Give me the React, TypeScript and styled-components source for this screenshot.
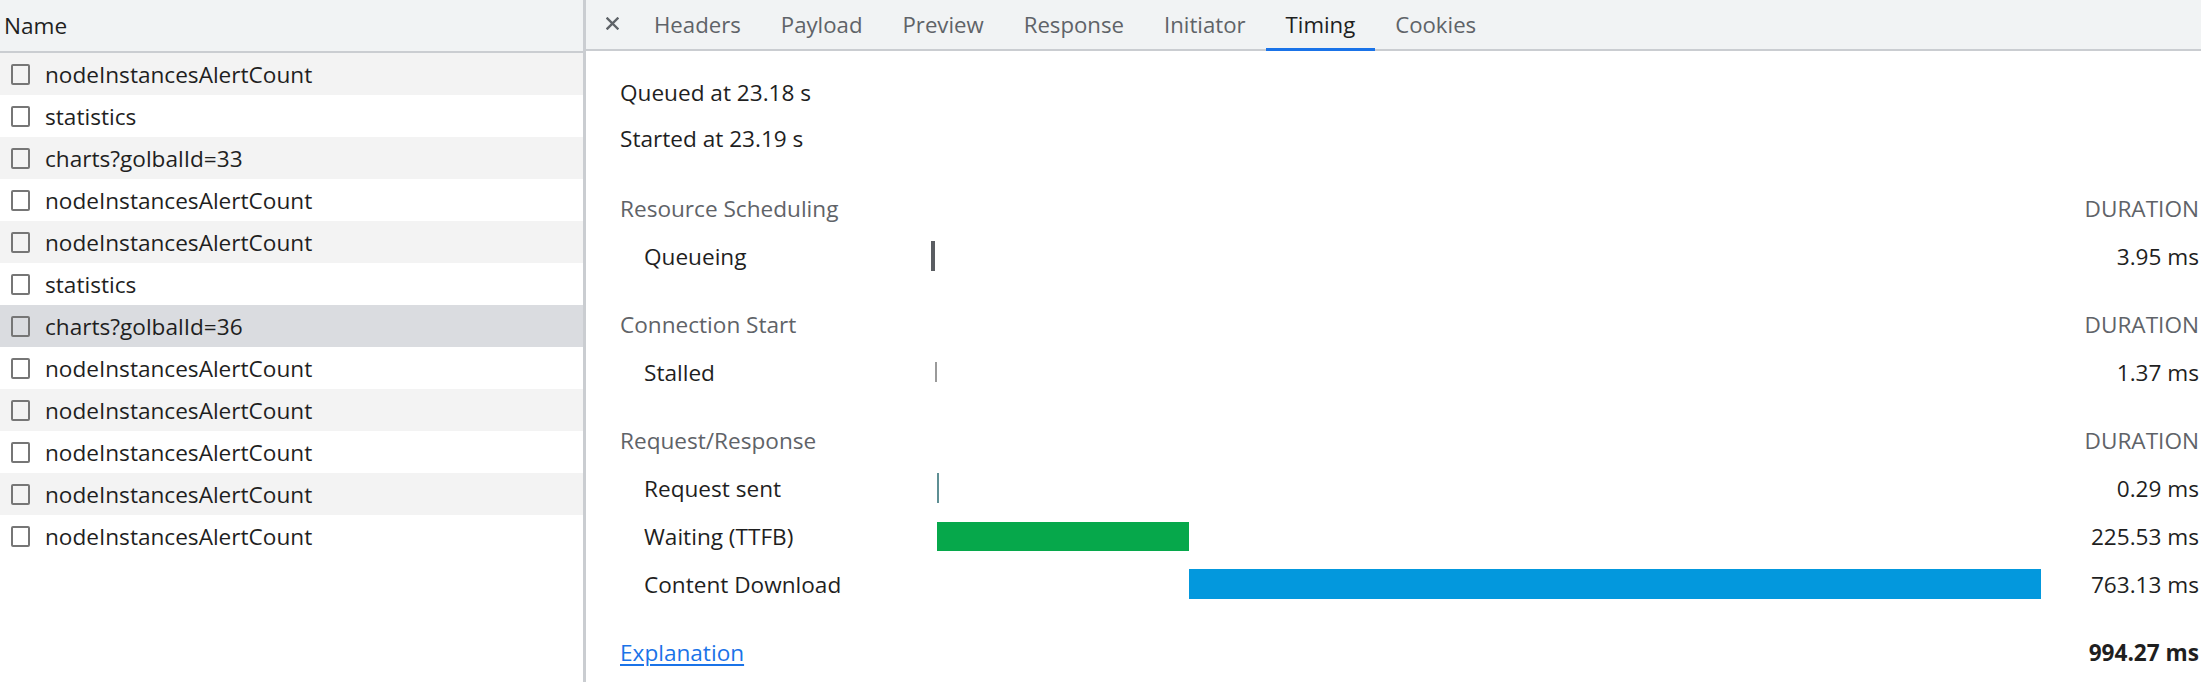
import React from "react";
import styled, { createGlobalStyle, css } from "styled-components";

const GlobalStyle = createGlobalStyle`
  html, body { margin: 0; padding: 0; background: #ffffff; }
  body { font-family: "Open Sans", "Noto Sans", sans-serif; color: #1f1f1f; }
  * { box-sizing: border-box; }
`;

const Page = styled.div`
  display: flex;
  width: 2201px;
  height: 682px;
  overflow: hidden;
  background: #ffffff;
  font-size: 22.6px;
`;

const LeftPane = styled.div`
  width: 583px;
  flex: none;
  display: flex;
  flex-direction: column;
`;

const NameHeader = styled.div`
  height: 53px;
  background: #f1f3f4;
  border-bottom: 2px solid #cacdd1;
  display: flex;
  align-items: center;
  padding-left: 4px;
  color: #1f1f1f;
`;

const RequestRow = styled.div<{ $striped: boolean; $selected: boolean }>`
  height: 42px;
  display: flex;
  align-items: center;
  padding-left: 11px;
  gap: 15px;
  white-space: nowrap;
  background: ${(p) => (p.$selected ? "#dadce0" : p.$striped ? "#f3f3f3" : "#ffffff")};
`;

const CheckBox = styled.span`
  width: 19px;
  height: 21px;
  border: 2px solid #767676;
  border-radius: 2px;
  background: transparent;
  flex: none;
`;

const Divider = styled.div`
  width: 3px;
  flex: none;
  background: #cacdd1;
`;

const RightPane = styled.div`
  flex: 1;
  display: flex;
  flex-direction: column;
  min-width: 0;
`;

const TabBar = styled.div`
  height: 51px;
  background: #f1f3f4;
  border-bottom: 2px solid #cacdd1;
  display: flex;
  align-items: stretch;
  font-size: 22.2px;
`;

const CloseButton = styled.div`
  display: flex;
  align-items: center;
  padding: 0 15px 2px 20px;
  color: #5f6368;
`;

const Tab = styled.div<{ $active?: boolean }>`
  position: relative;
  display: flex;
  align-items: center;
  padding: 0 20px;
  color: ${(p) => (p.$active ? "#1f1f1f" : "#5f6368")};
  white-space: nowrap;
  ${(p) =>
    p.$active &&
    css`
      &::after {
        content: "";
        position: absolute;
        left: 0;
        right: 0;
        bottom: -2px;
        height: 3px;
        background: #1a73e8;
      }
    `}
`;

const Content = styled.div`
  padding: 18px 2px 0 34px;
  display: flex;
  flex-direction: column;
`;

const InfoLine = styled.div`
  height: 46px;
  display: flex;
  align-items: center;
  color: #1f1f1f;
`;

const Section = styled.div<{ $gap: number }>`
  margin-top: ${(p) => p.$gap}px;
  display: flex;
  flex-direction: column;
`;

const TimingRow = styled.div`
  height: 48px;
  display: grid;
  grid-template-columns: 311px 1110px 1fr;
  align-items: center;
  white-space: nowrap;
`;

const SectionTitle = styled.div`
  color: #5f6368;
`;

const DurationHead = styled.div`
  grid-column: 3;
  text-align: right;
  color: #5f6368;
  text-transform: uppercase;
`;

const PhaseLabel = styled.div`
  padding-left: 24px;
  color: #1f1f1f;
`;

const Track = styled.div`
  height: 100%;
  display: flex;
  align-items: center;
`;

const Bar = styled.div<{ $color: string; $h: number }>`
  flex: none;
  height: ${(p) => p.$h}px;
  background: ${(p) => p.$color};
`;

const Duration = styled.div<{ $bold?: boolean }>`
  text-align: right;
  color: #1f1f1f;
  font-weight: ${(p) => (p.$bold ? 700 : 400)};
`;

const Link = styled.a`
  color: #1a73e8;
  text-decoration: underline;
  text-underline-offset: 3px;
`;

const requests = [
  "nodeInstancesAlertCount",
  "statistics",
  "charts?golbalId=33",
  "nodeInstancesAlertCount",
  "nodeInstancesAlertCount",
  "statistics",
  "charts?golbalId=36",
  "nodeInstancesAlertCount",
  "nodeInstancesAlertCount",
  "nodeInstancesAlertCount",
  "nodeInstancesAlertCount",
  "nodeInstancesAlertCount",
];

const tabs = ["Headers", "Payload", "Preview", "Response", "Initiator", "Timing", "Cookies"];

const TOTAL = 994.27;
const TRACK = 1110;

type Phase = { label: string; start: number; dur: number; color: string; h: number; text: string };
type Group = { title: string; gap: number; phases: Phase[] };

const groups: Group[] = [
  {
    title: "Resource Scheduling",
    gap: 23,
    phases: [{ label: "Queueing", start: 0, dur: 3.95, color: "#5a5d62", h: 30, text: "3.95 ms" }],
  },
  {
    title: "Connection Start",
    gap: 20,
    phases: [{ label: "Stalled", start: 3.95, dur: 1.37, color: "#9a9a9a", h: 20, text: "1.37 ms" }],
  },
  {
    title: "Request/Response",
    gap: 20,
    phases: [
      { label: "Request sent", start: 5.32, dur: 0.29, color: "#5e8f94", h: 30, text: "0.29 ms" },
      { label: "Waiting (TTFB)", start: 5.61, dur: 225.53, color: "#06a84b", h: 29, text: "225.53 ms" },
      { label: "Content Download", start: 231.14, dur: 763.13, color: "#0398dd", h: 30, text: "763.13 ms" },
    ],
  },
];

const CloseIcon = () => (
  <svg width="13" height="13" viewBox="0 0 13 13">
    <path d="M1.5 1.5 L11.5 11.5 M11.5 1.5 L1.5 11.5" stroke="#5f6368" strokeWidth="2.4" strokeLinecap="square" />
  </svg>
);

export default function App() {
  return (
    <>
      <GlobalStyle />
      <Page>
        <LeftPane>
          <NameHeader>Name</NameHeader>
          {requests.map((r, i) => (
            <RequestRow key={i} $striped={i % 2 === 0} $selected={i === 6}>
              <CheckBox />
              <span>{r}</span>
            </RequestRow>
          ))}
        </LeftPane>
        <Divider />
        <RightPane>
          <TabBar>
            <CloseButton>
              <CloseIcon />
            </CloseButton>
            {tabs.map((t) => (
              <Tab key={t} $active={t === "Timing"}>
                {t}
              </Tab>
            ))}
          </TabBar>
          <Content>
            <InfoLine>Queued at 23.18 s</InfoLine>
            <InfoLine>Started at 23.19 s</InfoLine>
            {groups.map((g) => (
              <Section key={g.title} $gap={g.gap}>
                <TimingRow>
                  <SectionTitle>{g.title}</SectionTitle>
                  <DurationHead>Duration</DurationHead>
                </TimingRow>
                {g.phases.map((p) => {
                  const left = (p.start / TOTAL) * TRACK;
                  const width = Math.max(1.5, (p.dur / TOTAL) * TRACK);
                  const w = p.dur < 1 ? 2 : width;
                  return (
                    <TimingRow key={p.label}>
                      <PhaseLabel>{p.label}</PhaseLabel>
                      <Track>
                        <Bar $color={p.color} $h={p.h} style={{ marginLeft: left, width: w }} />
                      </Track>
                      <Duration>{p.text}</Duration>
                    </TimingRow>
                  );
                })}
              </Section>
            ))}
            <Section $gap={20}>
              <TimingRow>
                <div>
                  <Link href="#">Explanation</Link>
                </div>
                <div />
                <Duration $bold>994.27 ms</Duration>
              </TimingRow>
            </Section>
          </Content>
        </RightPane>
      </Page>
    </>
  );
}
